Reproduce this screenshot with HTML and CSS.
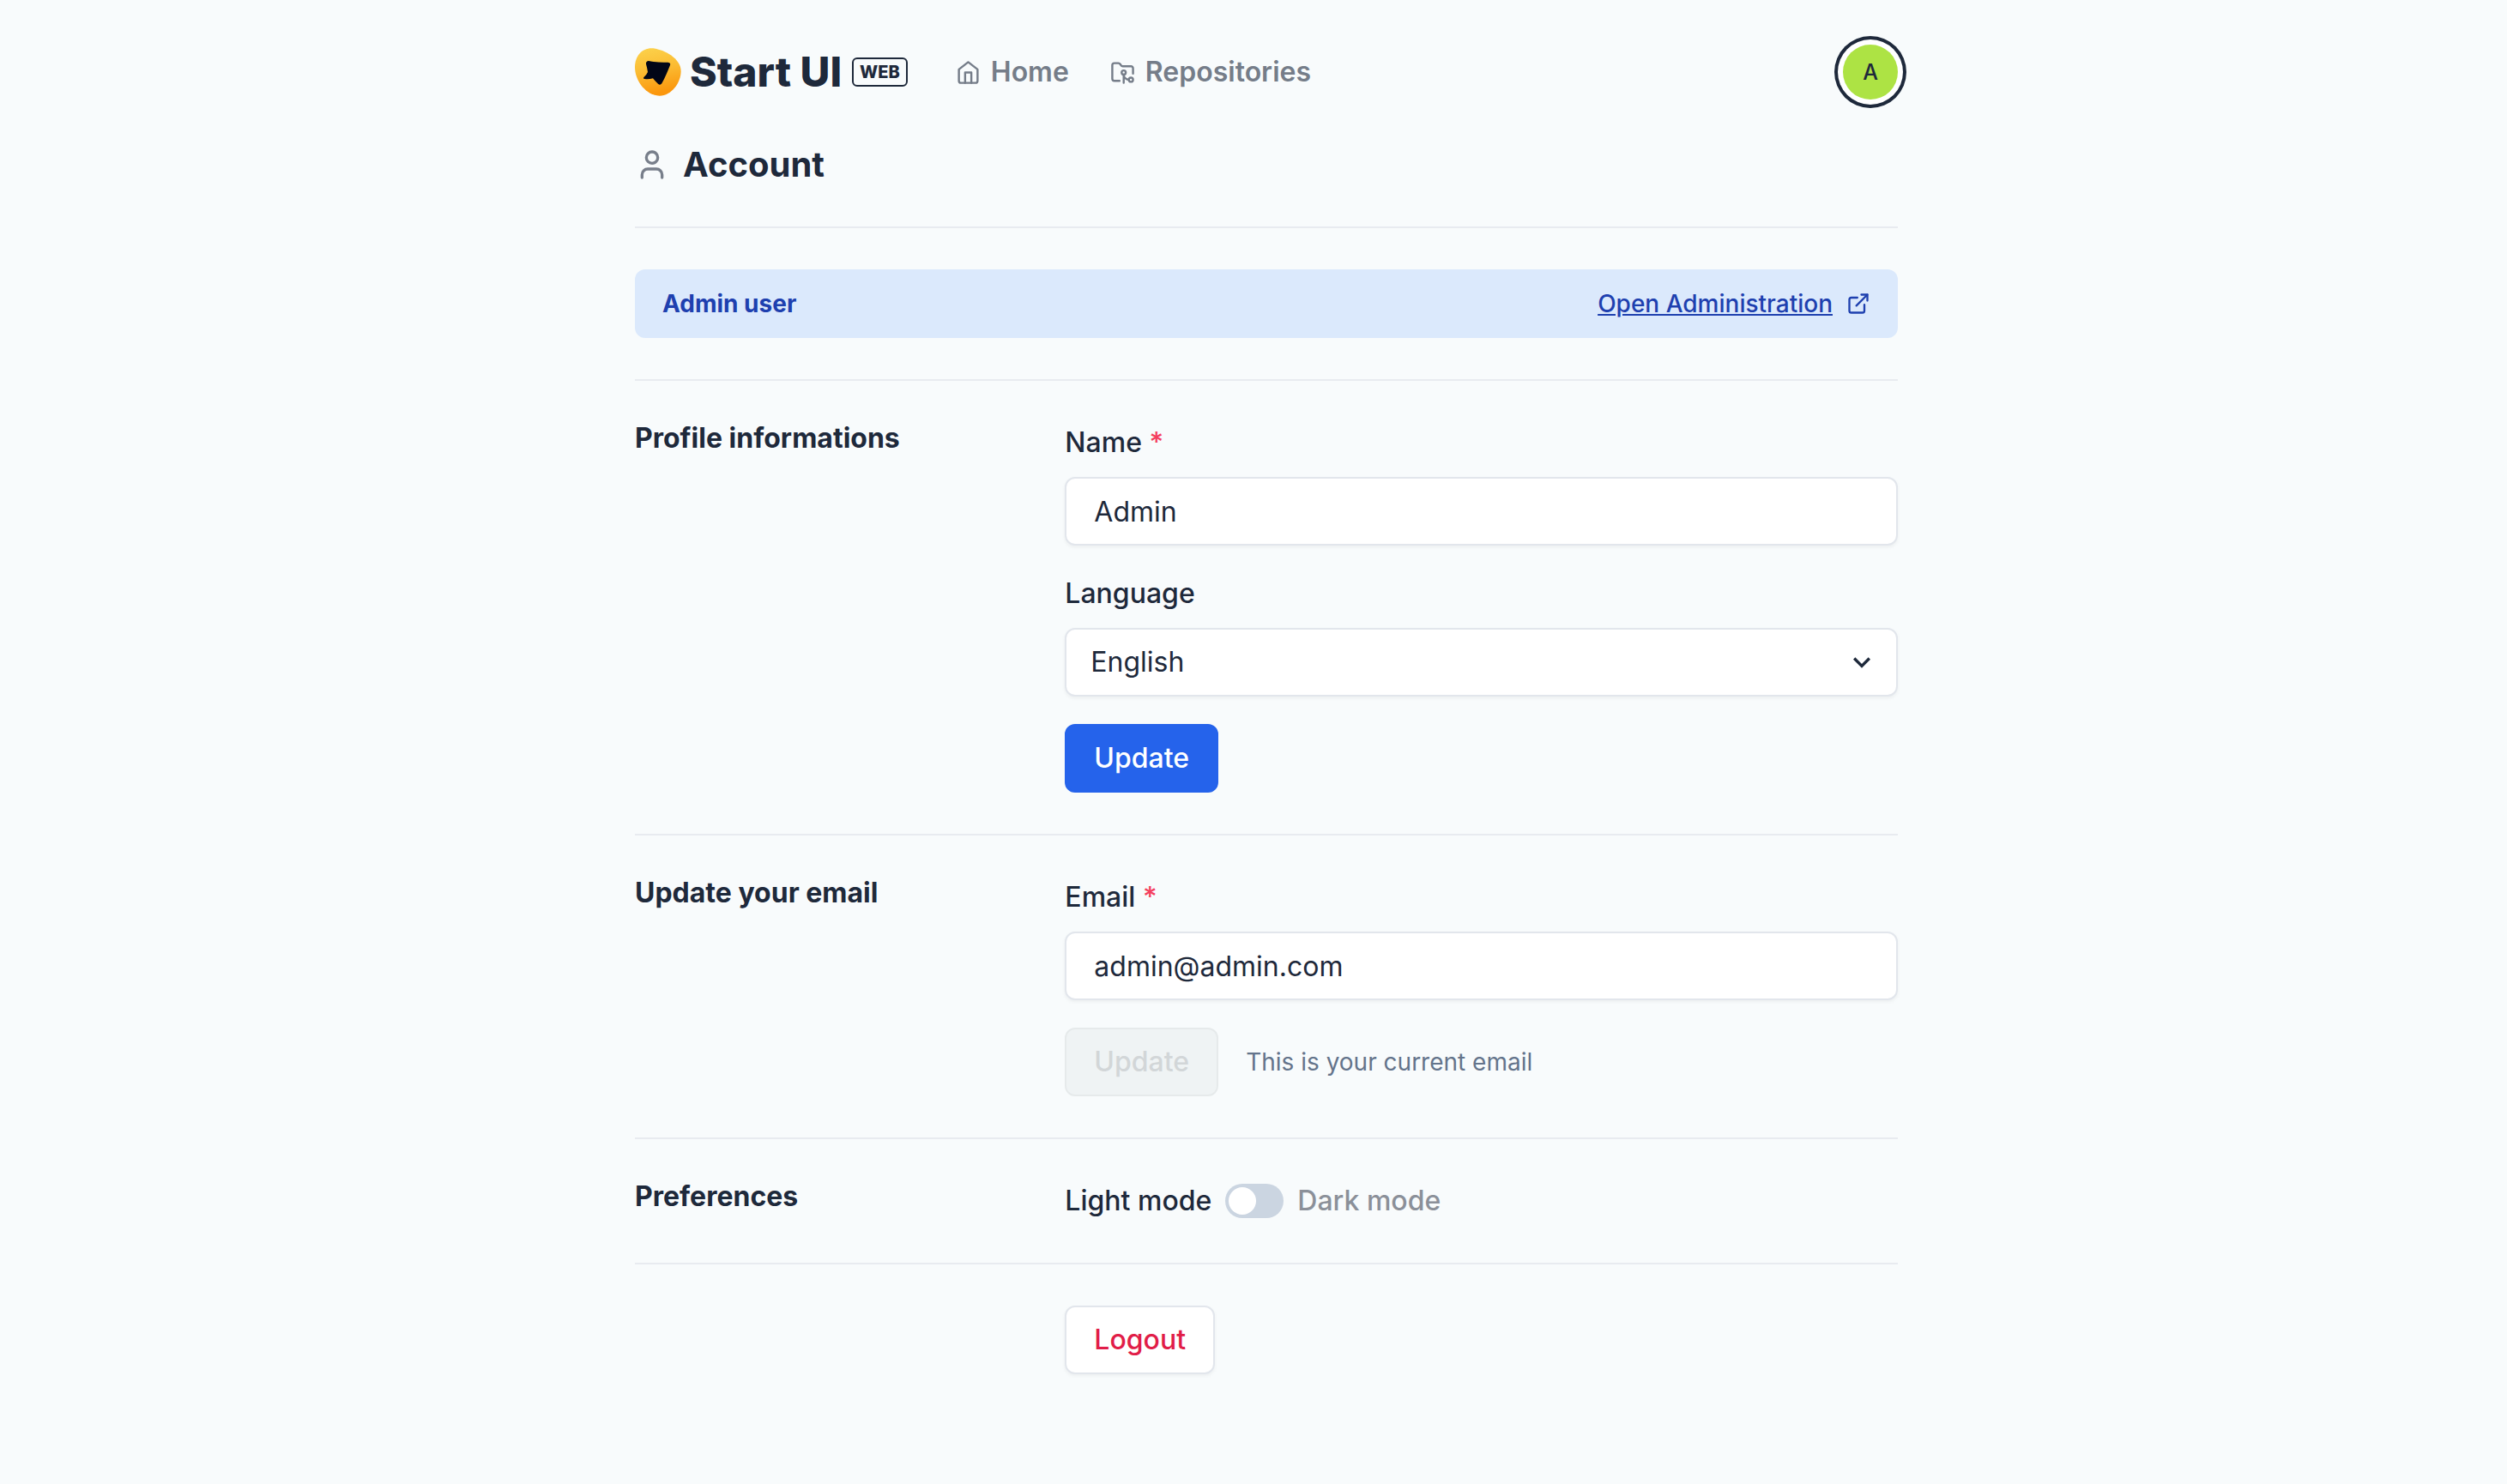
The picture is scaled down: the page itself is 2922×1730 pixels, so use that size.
FILE: index.html
```html
<!DOCTYPE html>
<html lang="en">
<head>
<meta charset="utf-8">
<meta name="viewport" content="width=device-width, initial-scale=1">
<title>Account - Start UI</title>
<link rel="stylesheet" href="styles.css">
</head>
<body>
<header class="container topbar">
  <a class="logo" href="#" aria-label="Start UI Web">
    <svg class="logo-mark" viewBox="30 47 162 166" aria-hidden="true">
      <defs>
        <linearGradient id="sun" x1="0" y1="0" x2="0.2" y2="1">
          <stop offset="0" stop-color="#fcd34d"/>
          <stop offset="0.5" stop-color="#fbbc33"/>
          <stop offset="1" stop-color="#fb970d"/>
        </linearGradient>
      </defs>
      <path fill="url(#sun)" d="M88 47C122 47 191 78 191 127C191 167 158 213 116 213C72 213 30 164 30 113C30 75 54 47 88 47Z"/>
      <path fill="#020617" d="M78 91Q110 98 146 96Q156 97 153 106C144 128 136 148 124 170Q118 178 111 171Q101 162 93 152Q78 156 64 154Q57 152 62 147Q72 138 75 130Q73 115 69 102Q68 92 78 91Z"/>
    </svg>
    <span class="logo-name">Start UI</span>
    <span class="logo-badge">WEB</span>
  </a>
  <nav class="nav">
    <a class="nav-link" href="#">
      <svg class="icon" viewBox="0 0 24 24" aria-hidden="true"><path d="m3 9 9-7 9 7v11a2 2 0 0 1-2 2H5a2 2 0 0 1-2-2z"/><path d="M9 22V12h6v10"/></svg>
      Home
    </a>
    <a class="nav-link" href="#">
      <svg class="icon" viewBox="0 0 24 24" aria-hidden="true"><path d="M9 20H4a2 2 0 0 1-2-2V5a2 2 0 0 1 2-2h3.9a2 2 0 0 1 1.69.9l.81 1.2a2 2 0 0 0 1.67.9H20a2 2 0 0 1 2 2v5"/><circle cx="13" cy="12" r="2"/><path d="M18 19c-2.8 0-5-2.2-5-5v8"/><circle cx="20" cy="19" r="2"/></svg>
      Repositories
    </a>
  </nav>
  <button class="avatar" type="button" aria-label="Account menu">A</button>
</header>

<main class="container">
  <div class="page-title">
    <svg class="title-icon" viewBox="0 0 24 24" aria-hidden="true"><path d="M19 21v-2a4 4 0 0 0-4-4H9a4 4 0 0 0-4 4v2"/><circle cx="12" cy="7" r="4"/></svg>
    <h1>Account</h1>
  </div>

  <section class="section">
    <div class="alert">
      <strong>Admin user</strong>
      <a class="alert-link" href="#">
        <span>Open Administration</span>
        <svg class="alert-icon" viewBox="0 0 24 24" aria-hidden="true"><path d="M18 13v6a2 2 0 0 1-2 2H5a2 2 0 0 1-2-2V8a2 2 0 0 1 2-2h6"/><path d="M15 3h6v6"/><path d="M10 14 21 3"/></svg>
      </a>
    </div>
  </section>

  <section class="section split">
    <h2>Profile informations</h2>
    <form class="form">
      <div class="field">
        <label for="name">Name <span class="required">*</span></label>
        <input class="control" id="name" type="text" value="Admin">
      </div>
      <div class="field">
        <label for="language">Language</label>
        <div class="select">
          <select class="control" id="language"><option>English</option></select>
          <svg class="chevron" viewBox="0 0 24 24" aria-hidden="true"><path d="M16.59 8.59 12 13.17 7.41 8.59 6 10l6 6 6-6z"/></svg>
        </div>
      </div>
      <div class="actions"><button class="button primary" type="button">Update</button></div>
    </form>
  </section>

  <section class="section split">
    <h2>Update your email</h2>
    <form class="form">
      <div class="field">
        <label for="email">Email <span class="required">*</span></label>
        <input class="control" id="email" type="email" value="admin@admin.com">
      </div>
      <div class="actions">
        <button class="button" type="button" disabled>Update</button>
        <p class="hint">This is your current email</p>
      </div>
    </form>
  </section>

  <section class="section split">
    <h2>Preferences</h2>
    <div class="mode">
      <label for="dark">Light mode</label>
      <input class="switch" id="dark" type="checkbox" role="switch">
      <label class="inactive" for="dark">Dark mode</label>
    </div>
  </section>

  <section class="section split">
    <div class="actions second"><button class="button danger" type="button">Logout</button></div>
  </section>
</main>
</body>
</html>
```
FILE: styles.css
```css
*, *::before, *::after { box-sizing: border-box; }

body {
  margin: 0;
  padding-left: 30px;
  background: #f8fbfc;
  color: #1e293b;
  font-family: Inter, "Liberation Sans", sans-serif;
  font-size: 32px;
  line-height: 48px;
}

h1, h2, p { margin: 0; }
h1 { font-size: 40px; line-height: 48px; font-weight: 700; }
h2 { font-size: 32px; line-height: 38px; font-weight: 700; }
a { color: inherit; }

svg { display: block; flex: none; }

.container {
  width: 100%;
  max-width: 1472px;
  margin: 0 auto;
}

.topbar {
  display: flex;
  align-items: center;
  padding: 52px 0;
}

.logo {
  display: flex;
  align-items: center;
  margin-right: 56px;
  text-decoration: none;
}
.logo-mark { width: 54px; height: 56px; margin-right: 10px; }
.logo-name { font-size: 48px; font-weight: 800; }
.logo-badge {
  margin-left: 12px;
  padding: 0 7px;
  border: 2px solid #1e293b;
  border-radius: 6px;
  font-size: 20px;
  line-height: 30px;
  font-weight: 800;
}

.nav { display: flex; gap: 48px; }
.nav-link {
  display: flex;
  align-items: center;
  gap: 12px;
  color: #757d89;
  font-weight: 600;
  text-decoration: none;
}
.icon, .title-icon, .alert-icon {
  fill: none;
  stroke: currentColor;
  stroke-width: 2;
  stroke-linecap: round;
  stroke-linejoin: round;
}
.icon { width: 29px; height: 29px; }

.avatar {
  width: 64px;
  height: 64px;
  margin-left: auto;
  padding: 0;
  border: 0;
  border-radius: 50%;
  background: #ade344;
  box-shadow: 0 0 0 6px #fff, 0 0 0 10px #1e293b;
  color: #1e293b;
  font: 500 25px/64px Inter, sans-serif;
}

.page-title {
  display: flex;
  align-items: center;
  gap: 16px;
  padding-bottom: 48px;
}
.title-icon { width: 40px; height: 40px; color: #787f8b; }

.section {
  padding: 48px 0;
  border-top: 2px solid #e8ebf0;
}
.split {
  display: grid;
  grid-template-columns: 1fr 2fr;
  column-gap: 16px;
}
.second { grid-column: 2; }

.alert {
  display: flex;
  align-items: center;
  justify-content: space-between;
  padding: 16px 32px;
  border-radius: 12px;
  background: #dbe9fc;
  color: #1e40af;
  font-size: 28px;
}
.alert-link {
  display: flex;
  align-items: center;
  gap: 16px;
  font-weight: 500;
  text-decoration: none;
}
.alert-link span { text-decoration: underline; }
.alert-icon { width: 28px; height: 28px; }

.form { display: grid; gap: 32px; }
.field { display: grid; gap: 16px; }
label { font-weight: 500; }
.required { color: #f43f5e; }

.control {
  width: 100%;
  height: 80px;
  margin: 0;
  padding: 0 32px;
  border: 2px solid #e2e6ec;
  border-radius: 12px;
  background: #fff;
  box-shadow: 0 2px 4px rgba(0, 0, 0, 0.05);
  color: inherit;
  font: inherit;
}
.select { position: relative; }
.select .control { padding: 0 28px; appearance: none; }
.chevron {
  position: absolute;
  top: 20px;
  right: 22px;
  width: 40px;
  height: 40px;
  fill: #1e293b;
  pointer-events: none;
}

.actions { display: flex; align-items: center; gap: 32px; }
.button {
  height: 80px;
  padding: 0 32px;
  border: 2px solid #e2e6ec;
  border-radius: 12px;
  background: #fff;
  font: inherit;
  font-weight: 500;
}
.primary { border-color: #2563eb; background: #2563eb; color: #fff; }
.danger { color: #e11d48; box-shadow: 0 2px 4px rgba(0, 0, 0, 0.05); }
.button:disabled { border-color: #e6eaeb; background: #eff3f4; color: #d2d6d8; }
.hint { color: #64748b; font-size: 28px; }

.mode { display: flex; align-items: center; gap: 16px; }
.inactive { color: #8b9099; }
.switch {
  flex: none;
  width: 68px;
  height: 40px;
  margin: 0;
  padding: 4px;
  border-radius: 20px;
  background: #cbd5e1;
  appearance: none;
}
.switch::before {
  content: "";
  display: block;
  width: 32px;
  height: 32px;
  border-radius: 50%;
  background: #fff;
}
.switch:checked::before { margin-left: auto; }
```
